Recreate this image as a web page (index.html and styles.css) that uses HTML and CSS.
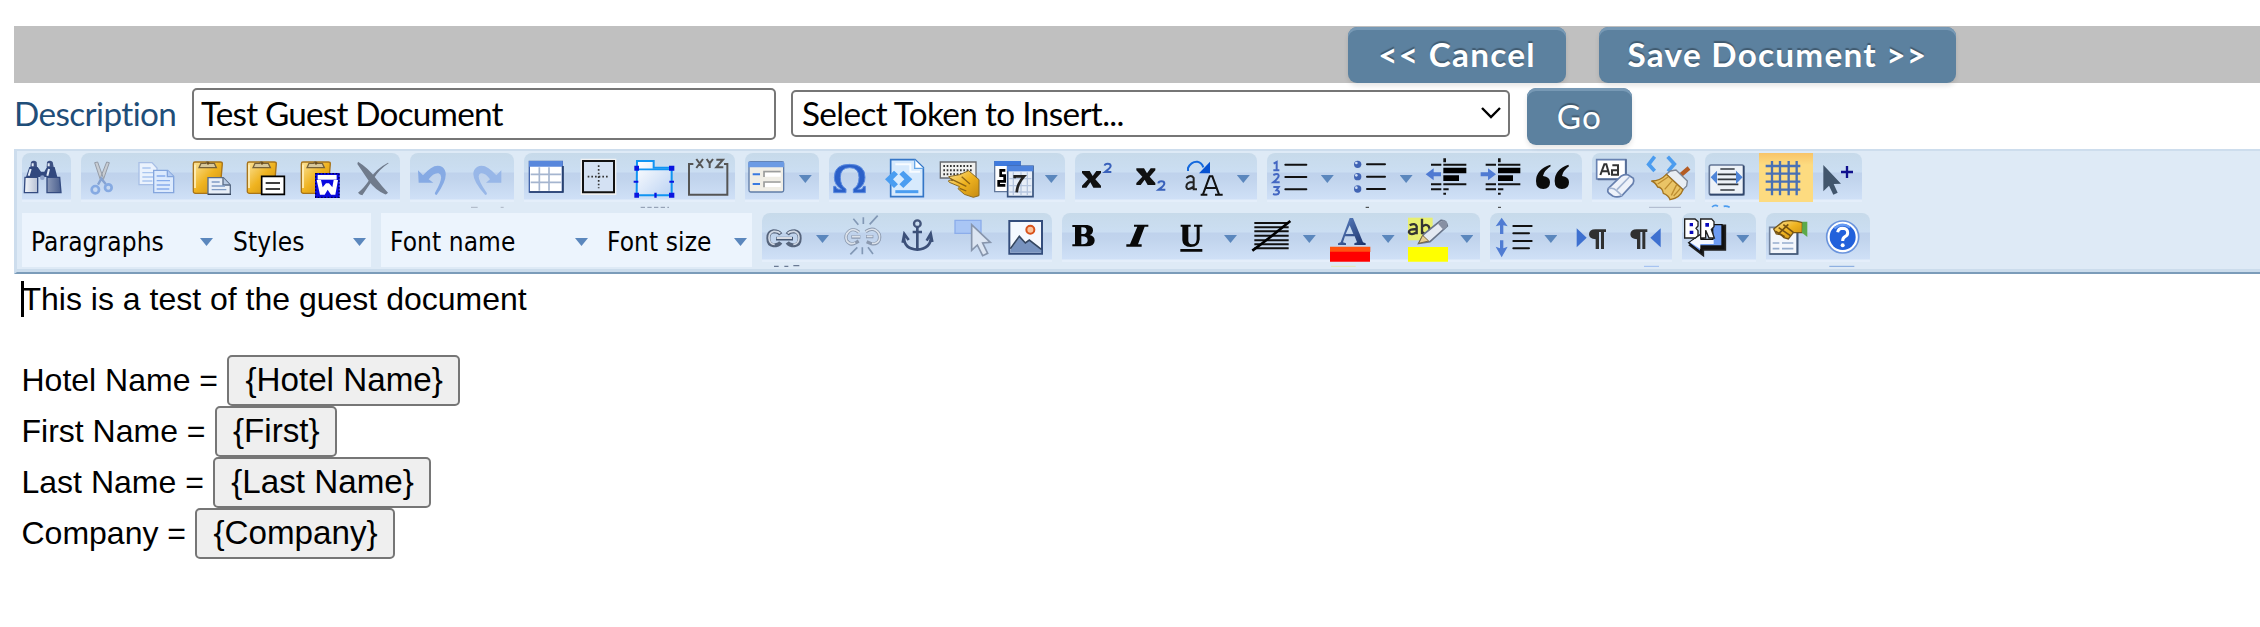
FILE: index.html
```html
<!DOCTYPE html>
<html lang="en">
<head>
<meta charset="utf-8">
<title>Guest Document</title>
<link rel="stylesheet" href="styles.css">
</head>
<body>
<svg class="defs" width="0" height="0">
<defs>
<linearGradient id="gold" x1="0" y1="0" x2="1" y2="1"><stop offset="0" stop-color="#fbe39a"/><stop offset=".5" stop-color="#efb31f"/><stop offset="1" stop-color="#c58a12"/></linearGradient>
<linearGradient id="steel" x1="0" y1="0" x2="1" y2="0"><stop offset="0" stop-color="#f4f7fb"/><stop offset="1" stop-color="#4a5f8e"/></linearGradient>
<linearGradient id="sky" x1="0" y1="0" x2="1" y2="1"><stop offset="0" stop-color="#ffffff"/><stop offset="1" stop-color="#bcd3f3"/></linearGradient>
<linearGradient id="navy" x1="0" y1="0" x2="1" y2="1"><stop offset="0" stop-color="#5f86c8"/><stop offset="1" stop-color="#1b3168"/></linearGradient>
<g id="clip">
<path d="M13 32q0-5 5-5h76q6 0 6 5l-7 82q-1 7-8 7H20q-8 0-7-8z" fill="url(#gold)" stroke="#a8741a" stroke-width="4"/>
<path d="M18 35v70" stroke="#fff0bd" stroke-width="5"/>
<path d="M30 44l6-13h14q4-9 12 0h14l6 13z" fill="#d8c89a" stroke="#75613a" stroke-width="4"/>
<circle cx="57" cy="31" r="4" fill="#6b4d1b"/>
</g>
</defs>
</svg>

<header class="actions">
<button class="btn btn-strong btn-cancel">&lt;&lt; Cancel</button>
<button class="btn btn-strong btn-save">Save Document &gt;&gt;</button>
</header>

<div class="form-row">
<label class="form-label" for="description">Description</label>
<input class="form-input" id="description" type="text" value="Test Guest Document">
<div class="form-select"><span class="select-text">Select Token to Insert...</span><svg class="chevron" viewBox="0 0 22 14"><path d="M2 2l9 9 9-9" fill="none" stroke="#000" stroke-width="2.4"/></svg></div>
<button class="btn btn-go">Go</button>
</div>

<section class="toolbar">
<div class="tool-row">
<div class="group">
<svg class="ico" viewBox="66 39 162 147"><path d="M93 66q8-7 17 0l1 15h-20zM141 66q8-7 17 0l3 15h-21z" fill="#3d5183"/><path d="M88 81h25l10 14h10l8-14h23l8 30H78z" fill="#31487e"/><path d="M75 112h38v46H73zM141 112h38l4 46h-42z" fill="url(#steel)" stroke="#344b80" stroke-width="4"/><path d="M92 87l-6 20M147 87l-5 20M98 70v9M146 70v9" stroke="#e5edf8" stroke-width="6"/><circle cx="127" cy="113" r="7" fill="#8da2c9"/></svg>
</div>
<div class="group">
<svg class="ico" viewBox="243 39 162 147"><path d="M284 68l9-2 17 48-9 5zM328 68l-8-2-19 48 9 5z" fill="#c8cdd3" stroke="#949ba6" stroke-width="3"/><circle cx="286" cy="149" r="11" fill="none" stroke="#86aae2" stroke-width="8"/><circle cx="325" cy="143" r="10" fill="none" stroke="#86aae2" stroke-width="8"/><path d="M294 134l10-18 13 16" fill="none" stroke="#86a3d2" stroke-width="7"/></svg>
<svg class="ico" viewBox="405 39 162 147"><path d="M417 68h39l15 16v50h-54z" fill="#eaf2fd" stroke="#a8bfe6" stroke-width="4"/><path d="M427 84h25M427 98h32M427 111h32M427 123h30" stroke="#a9c5ef" stroke-width="4"/><path d="M461 91h42l18 18v49h-60z" fill="#dceafd" stroke="#85a6dd" stroke-width="4"/><path d="M502 91v19h19" fill="#b5cdf3" stroke="#85a6dd" stroke-width="4"/><path d="M470 108h26M470 122h40M470 135h40M470 147h38" stroke="#86acec" stroke-width="4"/></svg>
<svg class="ico" viewBox="567 39 162 147"><use href="#clip" x="567" y="39"/><path d="M624 113h46l21 22v28h-67z" fill="#e8eff8" stroke="#5a6c86" stroke-width="4"/><path d="M669 113v22h21" fill="#b8cae2" stroke="#5a6c86" stroke-width="4"/><path d="M635 126h24M635 138h40M635 149h44" stroke="#7f9cc5" stroke-width="4"/><path d="M624 163h69" stroke="#35445c" stroke-width="4"/></svg>
<svg class="ico" viewBox="729 39 162 147"><use href="#clip" x="729" y="39"/><path d="M785 109h68v54h-68z" fill="#fff" stroke="#000" stroke-width="5"/><path d="M797 129h43M797 147h43" stroke="#000" stroke-width="4"/></svg>
<svg class="ico" viewBox="891 39 162 147"><use href="#clip" x="891" y="39"/><path d="M945 99h74v75h-74z" fill="#0a0ae0"/><path d="M947 101h70v71h-70z" fill="none" stroke="#000050" stroke-width="4" stroke-dasharray="5 5"/><path d="M953 105h57v14h-57z" fill="#fff"/><path d="M950 120h13l5 22 10-12h9l10 12 4-22h13l-8 44h-13l-10-15-9 15h-14z" fill="#fff"/></svg>
<svg class="ico" viewBox="1053 39 162 147"><path d="M1074 65q33 20 55 52 15 20 35 41-5 6-9 5-31-15-49-41-17-25-34-50zM1166 70q-27 17-44 44-17 25-35 52-8-1-13-8 20-16 36-42 19-30 54-48z" fill="#707b8c"/></svg>
</div>
<div class="group">
<svg class="ico" viewBox="30 39 162 147"><path d="M54 91l15 15q34-40 58-25 27 22-17 84-7 0-5-7 30-51 11-58-15-3-30 18l14 10H56z" fill="#86aae4"/></svg>
<svg class="ico" viewBox="192 39 162 147"><path d="M304 91l-15 15q-34-40-58-25-31 22 25 84 7 0 4-7-36-51-18-58 14-3 28 18l-12 10h46z" fill="#98b7e8"/><path d="M213 202h20M302 202h9" stroke="#aab4c2" stroke-width="3"/></svg>
</div>
<div class="group">
<svg class="ico" viewBox="372 39 162 147"><path d="M388 64h99v92h-99z" fill="#fff" stroke="#4164aa" stroke-width="4"/><path d="M387 63h101v17H387z" fill="#5887dc"/><path d="M388 156h101V78" fill="none" stroke="#243d6b" stroke-width="5"/><path d="M392 103h92M392 127h92M418 82v70M447 82v70" stroke="#a5b5cf" stroke-width="5"/></svg>
<svg class="ico" viewBox="534 39 162 147"><path d="M542 56h107v109H542z" fill="#f0f1f2"/><path d="M549 63h93v94h-93z" fill="#d4e1f3" stroke="#111" stroke-width="6"/><path d="M563 110h65M596 76v69" stroke="#333" stroke-width="5" stroke-dasharray="5 6"/></svg>
<svg class="ico" viewBox="696 39 162 147"><path d="M711 63h50v20h54v83H710z" fill="url(#sky)" stroke="#1094f2" stroke-width="6"/><path d="M711 88h102" stroke="#1094f2" stroke-width="5"/><path d="M703 77h14v15h-14zM807 77h16v15h-16zM703 158h14v15h-14zM807 158h16v15h-16zM701 122h14v6h-14zM808 122h14v6h-14zM763 158h7v15h-7z" fill="#0a15e0"/><path d="M722 202h85" stroke="#8795aa" stroke-width="3" stroke-dasharray="13 7"/></svg>
<svg class="ico" viewBox="858 39 162 147"><path d="M880 72h-13v92h115V72h-10" fill="none" stroke="#555" stroke-width="6"/><path d="M889 57l20 27M909 57l-20 27M920 57l9 13v14M939 57l-10 13M949 59h20l-20 23h21" fill="none" stroke="#555" stroke-width="6"/></svg>
</div>
<div class="group">
<svg class="ico" viewBox="1035 39 162 147"><rect x="1047" y="65" width="104" height="91" rx="5" fill="#f0eee6" stroke="#607da8" stroke-width="4"/><path d="M1045 65h107v17h-107z" fill="#6c9be4"/><path d="M1058 103h22M1058 132h22" stroke="#3a7ae0" stroke-width="6"/><path d="M1142 95h-50v16M1142 126h-50v16" fill="none" stroke="#9b9d9d" stroke-width="5"/><path d="M1095 98h47v12h-47zM1095 129h47v12h-47z" fill="#fff"/></svg>
<span class="drop"></span>
</div>
<div class="group">
<svg class="ico" viewBox="87 39 162 147"><path d="M101 158v-19h6q2 9 10 9h8q-22-12-22-36 0-39 46-39t46 39q0 24-22 36h9q7 0 8-9h6v19h-36v-11q17-9 17-35 0-29-28-29t-28 29q0 26 17 35v11z" fill="#2b60c9" stroke="#5b8ade" stroke-width="3"/></svg>
<svg class="ico" viewBox="249 39 162 147"><path d="M272 59h73l25 24v87h-98z" fill="#d7eafd" stroke="#3476c7" stroke-width="5"/><path d="M344 59v26h26" fill="#fff" stroke="#65a6e7" stroke-width="4"/><path d="M286 73h45v22h29" fill="none" stroke="#f8fcff" stroke-width="6"/><path d="M255 118l27-26 12 11-15 15 15 15-12 11zM337 118l-27-26-12 11 15 15-15 15 12 11z" fill="#4a9df1"/><path d="M286 155h69" stroke="#4a9df1" stroke-width="9"/></svg>
<svg class="ico" viewBox="411 39 162 147"><path d="M421 66h107v48H421z" fill="#f0f0ee" stroke="#686b70" stroke-width="4"/><path d="M430 78h88M430 91h88M430 103h60" stroke="#333" stroke-width="6" stroke-dasharray="5 5"/><path d="M446 110l33-6 27-12 31 27v48l-17 5-27-9-19-17 5-6-31-13q-9-9 11-5z" fill="url(#gold)" stroke="#8b6a22" stroke-width="3"/><path d="M451 116l48 23M485 110l25 22M479 145l20 8" stroke="#8d6414" stroke-width="4"/></svg>
<svg class="ico" viewBox="573 39 162 147"><path d="M584 65h77v90h-77z" fill="#fff" stroke="#63799b" stroke-width="4"/><path d="M583 63h79v15h-79z" fill="#3f7add"/><path d="M616 91h-14v16h12v17h-18v12h20" fill="none" stroke="#000" stroke-width="8"/><path d="M623 79h76v91h-76z" fill="#e7eef8" stroke="#38537e" stroke-width="5"/><path d="M621 77h79v17h-79z" fill="#4f84dd"/><path d="M628 116h66M628 137h66M628 156h66M640 97v69M663 97v69M682 97v69" stroke="#b6c6df" stroke-width="4"/><path d="M644 115v-6h28q-20 22-22 48" fill="none" stroke="#222" stroke-width="8"/></svg>
<span class="drop"></span>
</div>
<div class="group">
<svg class="ico" viewBox="825 39 162 147"><path d="M846 93h23l9 15 11-15h14v6l-17 19 17 19v6h-23l-9-16-12 16h-13v-6l18-19-18-19z" fill="#111"/><path d="M914 77q1-6 9-6 9 0 9 7 0 5-17 18h19" fill="none" stroke="#3961bb" stroke-width="6"/></svg>
<svg class="ico" viewBox="987 39 162 147"><path d="M1009 85h23l9 15 11-15h14v6l-17 19 17 19v6h-23l-9-16-12 16h-13v-6l18-19-18-19z" fill="#111"/><path d="M1075 130q1-6 9-6 9 0 9 7 0 5-17 18h20" fill="none" stroke="#3961bb" stroke-width="6"/></svg>
<svg class="ico" viewBox="-51 39 162 147"><path d="M-36 93v-9q9-20 28-19 13 2 18 17" fill="none" stroke="#1469dd" stroke-width="6"/><path d="M30 65v35H-3z" fill="#0752d1"/><path d="M-41 114q15-12 22 0v34h10M-19 126q-22-1-22 14 3 14 22 0" fill="none" stroke="#222" stroke-width="6"/><path d="M2 164h20M45 164h23M9 163l20-54h8l20 54M17 144h32" fill="none" stroke="#111" stroke-width="6"/></svg>
<span class="drop"></span>
</div>
<div class="group">
<svg class="ico" viewBox="198 39 162 147"><path d="M218 71l9-5v24M217 91h18M217 105q15-7 16 2 0 6-16 20h19M217 141h16l-7 10q9 1 8 7-3 9-18 4" fill="none" stroke="#4467c2" stroke-width="6"/><path d="M253 74h63M253 111h63M253 148h63" stroke="#111" stroke-width="6" stroke-linecap="round"/></svg>
<span class="drop"></span>
<svg class="ico" viewBox="435 39 162 147"><g fill="#4164b4"><circle cx="470" cy="73" r="11"/><circle cx="470" cy="110" r="11"/><circle cx="470" cy="147" r="11"/></g><g fill="#cddcf5"><circle cx="466" cy="69" r="4"/><circle cx="466" cy="106" r="4"/><circle cx="466" cy="143" r="4"/></g><path d="M498 73h54M498 110h54M498 147h54" stroke="#111" stroke-width="6" stroke-linecap="round"/><path d="M494 202h10" stroke="#333" stroke-width="3"/></svg>
<span class="drop"></span>
<svg class="ico" viewBox="672 39 162 147"><path d="M730 58h8M730 64h8M730 161h8M693 74h31M730 74h69M693 133h31M730 133h69M693 148h31M730 148h16" stroke="#111" stroke-width="6"/><path d="M730 83h69v17h-69zM730 106h47v17h-47z" fill="#000"/><path d="M677 103l24-18v12h22v12h-22v12z" fill="#4f7ad2"/></svg>
<svg class="ico" viewBox="834 39 162 147"><path d="M894 58h8M894 64h8M894 161h8M857 74h31M894 74h67M857 133h31M894 133h67M857 148h31M894 148h16" stroke="#111" stroke-width="6"/><path d="M894 83h67v17h-67zM894 106h45v17h-45z" fill="#000"/><path d="M888 103l-24-18v12h-22v12h22v12z" fill="#4f7ad2"/><path d="M894 202h9" stroke="#333" stroke-width="3"/></svg>
<svg class="ico" viewBox="-24 39 162 147"><path d="M31 74q-43 14-43 49 0 24 22 24 20 0 20-20 0-17-21-19 3-16 23-29zM85 74q-41 14-41 49 0 24 22 24 21 0 21-20 0-17-21-19 3-16 21-29z" fill="#0b0b0b"/></svg>
</div>
<div class="group">
<svg class="ico" viewBox="153 39 162 147"><path d="M167 59h87v58h-87z" fill="#fff" stroke="#6882b2" stroke-width="5"/><path d="M255 58v60h-85" fill="none" stroke="#536a93" stroke-width="5"/><path d="M178 105l12-32h6l9 32M183 94h18M214 76h17v28h-18V91h18" fill="none" stroke="#333" stroke-width="6"/><path d="M202 145l39-37q11-6 21-3l15 10q3 8-1 16l-33 36q-14 7-28 1l-12-9q-5-5-1-14z" fill="#eef2fa" stroke="#667fae" stroke-width="5"/><path d="M203 146q13-4 23 5l17 16M228 149l37-38" fill="none" stroke="#a3b4d1" stroke-width="5"/></svg>
<svg class="ico" viewBox="315 39 162 147"><path d="M341 50l-18 23 18 20M380 50l20 22-19 22" fill="none" stroke="#4b9cef" stroke-width="11"/><path d="M444 84l-26 22" stroke="#b45c24" stroke-width="13"/><path d="M388 93l17-3 34 33-2 15-11 11-50-46z" fill="#e8edf3" stroke="#7c8595" stroke-width="4"/><path d="M376 103l50 46q-9 25-39 30-4-13-20-19-3-18-17-19-7-14-19-18 27 0 45-20z" fill="#eac466" stroke="#a2731f" stroke-width="4"/><path d="M381 111l-31 21M394 122l-23 26M407 134l-16 32M418 145l-20 23" stroke="#bd8d31" stroke-width="4"/><path d="M324 202h96" stroke="#aab5c9" stroke-width="3"/></svg>
</div>
<div class="group">
<svg class="ico" viewBox="492 39 162 147"><rect x="505" y="75" width="103" height="89" rx="5" fill="#edf2f8" stroke="#637696" stroke-width="5"/><path d="M608 77v87H506" fill="none" stroke="#31476d" stroke-width="5"/><path d="M538 87h43M530 103h62M530 118h62M530 133h62M538 150h43" stroke="#33383f" stroke-width="5"/><path d="M509 112l19-20v40zM605 112l-20-20v40z" fill="#4e84d7"/><path d="M513 201q9-8 18-2M548 199q9-2 18 3" fill="none" stroke="#4b9cef" stroke-width="5"/></svg>
<svg class="ico ico-on" viewBox="651 39 162 147"><path d="M671 78h104M671 101h104M671 125h104M671 149h104M690 63v103M714 63v103M740 63v103M764 63v103" stroke="#4970b4" stroke-width="7"/></svg>
<svg class="ico" viewBox="816 39 162 147"><path d="M847 75v79l17-17 13 27 13-6-12-26 22-1z" fill="#42566d"/><path d="M918 78v36M900 96h36" stroke="#10108d" stroke-width="7"/></svg>
</div>
</div>

<div class="tool-row">
<div class="picker-group">
<span class="picker picker-para">Paragraphs</span><span class="picker picker-style">Styles</span>
</div>
<div class="picker-group">
<span class="picker picker-font">Font name</span><span class="picker picker-size">Font size</span>
</div>
<div class="group">
<svg class="ico" viewBox="1086 220 162 147"><path d="M1142 284q-6-9-22-9-15 2-15 21t15 21q16 0 22-9M1162 284q6-9 22-9 15 2 15 21t-15 21q-16 0-22-9" fill="none" stroke="#56647c" stroke-width="12"/><path d="M1141 281q-7-7-20-6-14 3-14 20 1 19 17 19M1163 281q7-7 20-6 14 3 14 20-1 19-17 19" fill="none" stroke="#d2dae6" stroke-width="5"/><path d="M1128 297h51" stroke="#465772" stroke-width="11"/><path d="M1130 295h46" stroke="#f4f7fc" stroke-width="5"/><path d="M1122 380h14M1153 380h12M1180 378h18" stroke="#6a7a94" stroke-width="4"/></svg>
<span class="drop"></span>
<svg class="ico" viewBox="123 220 162 147"><path d="M177 278q-16-14-29-4-15 12-8 29 10 16 28 6l8-5M197 276q17-12 30-4 15 9 11 28-7 16-24 12l-14-6M154 292h27M198 291h22" fill="none" stroke="#8b99af" stroke-width="10"/><path d="M177 278q-16-14-29-4-15 12-8 29 10 14 26 6M197 276q17-12 30-4 15 9 11 28-7 14-22 11M156 291h24M200 290h18" fill="none" stroke="#dbe2eb" stroke-width="5"/><path d="M160 237l15 18M190 233v20M233 228l-24 26M151 344l21-21M187 323v21M204 323l15 20" stroke="#8298b5" stroke-width="5"/></svg>
<svg class="ico" viewBox="285 220 162 147"><circle cx="352" cy="252" r="10" fill="none" stroke="#43557b" stroke-width="7"/><path d="M352 261v66M338 277h28M312 293q0 35 40 37 40-3 41-38M308 309l5-26 13 18M380 303l12-21 5 25" fill="none" stroke="#3c5079" stroke-width="8"/></svg>
<svg class="ico" viewBox="447 220 162 147"><path d="M465 242h78v39h-78z" fill="#a9c6f5" stroke="#8cadea" stroke-width="4"/><path d="M515 255v77l17-16 16 32 15-7-15-31 23-2z" fill="#dce5f2" stroke="#8795ac" stroke-width="5"/></svg>
<svg class="ico" viewBox="609 220 162 147"><path d="M628 244h98v98h-98z" fill="#f5f9ff" stroke="#344d7c" stroke-width="6"/><path d="M631 331l28-40 18 19 11-8 36 29v8h-93z" fill="#7893bf"/><path d="M631 327l27-37 18 20 12-9 36 28" fill="none" stroke="#344660" stroke-width="5"/><circle cx="691" cy="270" r="12" fill="#fac49e" stroke="#d8521b" stroke-width="6"/></svg>
</div>
<div class="group">
<svg class="ico" viewBox="786 220 162 147"><path d="M817 256h45q18 3 17 17-1 10-10 13 15 3 15 17-1 17-24 17h-43v-6h8v-52h-8zM844 263v20q16 2 16-10 0-12-16-10M844 290v24q19 1 19-12 0-13-19-12" fill="#080808" fill-rule="evenodd"/></svg>
<svg class="ico" viewBox="948 220 162 147"><path d="M1002 255h43v6h-11l-20 53h11v7h-46v-7h11l22-53h-10z" fill="#090909"/></svg>
<svg class="ico" viewBox="1110 220 162 147"><path d="M1142 255h30v6h-7v41q0 13 12 12 13 0 13-16v-37h-8v-6h25v6h-8v38q-2 23-27 23-24 0-25-20v-41h-5zM1141 328h66v8h-66z" fill="#090909"/></svg>
<span class="drop"></span>
<svg class="ico" viewBox="147 220 162 147"><path d="M163 250h103M163 263h103M163 275h103M163 288h103M163 302h103M163 314h103M163 326h103" stroke="#111" stroke-width="6"/><path d="M157 333l23-17 35-27 30-24 26-21" stroke="#000" stroke-width="8"/></svg>
<span class="drop"></span>
<svg class="ico" viewBox="384 220 162 147"><path d="M449 235h10l30 73 8 3v5h-34v-5l8-3-7-18h-29l-6 18 9 3v5h-24v-5l8-3zM449 257l-12 26h23z" fill="url(#navy)" fill-rule="evenodd"/><path d="M390 321h121v16H390z" fill="#ff5210"/><path d="M390 336h120v30H390z" fill="red"/><path d="M393 380h74" stroke="#e2e9b4" stroke-width="3"/></svg>
<span class="drop"></span>
<svg class="ico" viewBox="621 220 162 147"><path d="M627 234h74v68h-74z" fill="#e8ef70"/><path d="M632 257q17-9 21 3v24M653 269q-24-2-23 9 6 11 23 0M669 237v47M669 262q12-12 20-2 7 12-3 21-10 5-17-5" fill="none" stroke="#333" stroke-width="7"/><path d="M659 311l15-27 52-42q16-1 19 17l-52 47z" fill="#e4e9f2" stroke="#69758a" stroke-width="5"/><path d="M659 311l12-24 18 17z" fill="#e8cf91" stroke="#7b6944" stroke-width="3"/><path d="M717 252l16-11 11 6v14l-11 9z" fill="#8790a3"/><path d="M627 322h120v44H627z" fill="#ff0"/></svg>
<span class="drop"></span>
</div>
<div class="group">
<svg class="ico" viewBox="870 220 162 147"><path d="M905 234l18 26-13-3v26h-10v-26l-13 3zM905 353l18-32-13 5v-24h-10v24l-13-5z" fill="#507cd3"/><path d="M940 259h55M940 281h47M940 304h55M940 326h47" stroke="#111" stroke-width="6" stroke-linecap="round"/></svg>
<span class="drop"></span>
<svg class="ico" viewBox="87 220 162 147"><path d="M110 266l30 28-30 29z" fill="#3e70d0"/><path d="M198 269v8h-6v51h-9v-51h-6v51h-10v-29q-20-2-20-15 1-15 19-15z" fill="#303030"/></svg>
<svg class="ico" viewBox="249 220 162 147"><path d="M322 269v8h-6v51h-9v-51h-6v51h-10v-29q-20-2-20-15 1-15 19-15z" fill="#303030"/><path d="M362 266l-31 28 31 29z" fill="#3e70d0"/><path d="M312 380h45" stroke="#9abbf0" stroke-width="3"/></svg>
</div>
<div class="group">
<svg class="ico" viewBox="426 220 162 147"><path d="M525 257h31v74h-66v17l-41-31 41-31v16h35z" fill="#111" stroke="#222" stroke-width="5"/><path d="M518 255h28v64h-64v18l-36-28 36-25v15h36z" fill="#6e9cf2" stroke="#111" stroke-width="4"/><path d="M450 308l31-21v14h40v12h-40v15z" fill="#f4f8ff"/><path d="M434 238h31l9 8v13l-6 7 6 7v15l-8 7h-32zM482 238h33l7 8v15l-8 8 9 26h-16l-10-23v23h-15z" fill="#fff" stroke="#222" stroke-width="4"/><path d="M449 250h10v10h-10zM449 273h11v10h-11zM496 250h11v11h-11z" fill="#0808bd"/></svg>
<span class="drop"></span>
</div>
<div class="group">
<svg class="ico" viewBox="678 220 162 147"><path d="M689 263h82v80h-82z" fill="#f3f6fb" stroke="#72839e" stroke-width="5"/><path d="M773 266v77h-84" fill="none" stroke="#435978" stroke-width="5"/><path d="M698 310h20M726 310h34M698 327h20M726 327h34" stroke="#96adce" stroke-width="5"/><path d="M701 268l28-22q29-7 58 3v30h-27l-15 19-13-4-9-9-14-2z" fill="url(#gold)" stroke="#73551a" stroke-width="4"/><path d="M716 264l35 24M730 255l30 23M706 275l28 16M714 284l31-30" stroke="#765211" stroke-width="5"/><path d="M787 246h15v46l-16-13z" fill="#5caa4b"/></svg>
<svg class="ico" viewBox="840 220 162 147"><circle cx="908" cy="292" r="48" fill="#fff" stroke="#6a94dd" stroke-width="5"/><circle cx="908" cy="292" r="39" fill="#2261db"/><path d="M883 266q23-20 47-3" fill="none" stroke="#679bf2" stroke-width="7"/><path d="M893 278q2-12 15-12 15 1 15 13 0 8-8 12-7 4-7 13" fill="none" stroke="#fff" stroke-width="9"/><circle cx="908" cy="317" r="6" fill="#fff"/><path d="M868 380h75" stroke="#7ea4dc" stroke-width="3"/></svg>
</div>
</div>
</section>

<main class="document">
<p class="line line-first"><span class="caret"></span>This is a test of the guest document</p>
<p class="line">Hotel Name = <button class="token">{Hotel Name}</button></p>
<p class="line">First Name = <button class="token">{First}</button></p>
<p class="line">Last Name = <button class="token">{Last Name}</button></p>
<p class="line">Company = <button class="token">{Company}</button></p>
</main>
</body>
</html>
```

FILE: styles.css
```css
* { box-sizing: border-box; }

body {
  margin: 0;
  padding: 26px 0 0 14px;
  height: 627px;
  overflow: hidden;
  background: #fff;
  color: #000;
  font-family: Lato, sans-serif;
}

.defs { position: absolute; }

.actions {
  display: flex;
  gap: 33px;
  height: 57px;
  padding: 1px 0 0 1334px;
  background: #c0c0c0;
}

.btn {
  height: 56px;
  padding: 0 0 2px;
  border: 0;
  border-radius: 9px;
  background: #5c819f;
  box-shadow: inset 0 3px 0 #7799b5, 0 3px 5px rgba(0, 0, 0, .1);
  color: #fff;
  font: 33.3px/54px Lato, sans-serif;
  letter-spacing: 1.25px;
  text-shadow: 0 -2px 1px rgba(0, 0, 0, .3);
  white-space: nowrap;
}

.btn-strong { font-weight: 700; }
.btn-cancel { width: 218px; }
.btn-save { width: 357px; }
.btn-go { width: 105px; height: 57px; margin-left: 17px; }

.form-row {
  display: flex;
  align-items: flex-start;
  height: 66px;
  padding-top: 5px;
}

.form-label {
  width: 178px;
  color: #1f4e79;
  font-size: 33.3px;
  line-height: 50px;
  letter-spacing: -.6px;
}

.form-input,
.form-select {
  border: 2px solid #767676;
  border-radius: 5px;
  background: #fff;
  color: #000;
  font: 33.3px Lato, sans-serif;
}

.form-input {
  width: 584px;
  height: 52px;
  padding: 0 7px 2px;
  letter-spacing: -.8px;
}

.form-select {
  display: flex;
  align-items: center;
  justify-content: space-between;
  width: 719px;
  height: 47px;
  margin: 2px 0 0 15px;
  padding: 0 6px 1px 9px;
  letter-spacing: -.65px;
}

.chevron { width: 22px; height: 14px; }

.toolbar {
  height: 125px;
  padding: 2px 0 0 5px;
  border-top: 2px solid #cddded;
  border-left: 3px solid #cddded;
  border-bottom: 2px solid #7b9cb9;
  background: linear-gradient(#deeaf6 0 118px, #cbdcec 118px);
}

.tool-row {
  display: flex;
  gap: 10px;
  height: 60px;
}

.group {
  display: flex;
  height: 49px;
  border-radius: 8px 8px 0 0;
  background: linear-gradient(#c7daea 0, #cbdef2 19px, #bfd2ec 20px, #c1d4ed 26px, #cfe0f7 46px, #e4eefa 47px);
}

.ico {
  flex: none;
  width: 54px;
  height: 49px;
  overflow: visible;
  filter: blur(.35px);
}

.ico:last-child,
.drop:last-child { margin-right: -4.8px; }

.ico-on {
  background: linear-gradient(#f8c468, #fddb80 12px, #fddb80);
  filter: none;
}

.drop {
  flex: none;
  width: 24.8px;
  height: 49px;
}

.drop::before,
.picker::after {
  content: "";
  display: block;
  width: 13px;
  height: 8px;
  background: #5b87bd;
  clip-path: polygon(0 0, 100% 0, 50% 100%);
}

.drop::before { margin-top: 22px; }

.picker-group {
  display: flex;
  height: 54px;
  background: #ecf4fd;
}

.picker {
  display: flex;
  align-items: center;
  justify-content: space-between;
  font-family: "DejaVu Sans Condensed", "DejaVu Sans", sans-serif;
  font-stretch: condensed;
  font-size: 26px;
  letter-spacing: .1px;
  white-space: nowrap;
}

.picker-para { width: 201px; padding: 4px 10px 0 9px; }
.picker-style { width: 148px; padding: 4px 5px 0 10px; }
.picker-font { width: 217px; padding: 4px 10px 0 9px; }
.picker-size { width: 154px; padding: 4px 5px 0 9px; }

.document {
  padding: 7px 0 0 7.5px;
  font: 32px/37px "Liberation Sans", Arial, sans-serif;
}

.line {
  position: relative;
  display: flex;
  align-items: baseline;
  height: 51px;
  margin: 0;
  white-space: pre;
}

.line-first { height: 74px; }

.caret {
  position: absolute;
  top: 0;
  left: -.5px;
  width: 3px;
  height: 36px;
  background: #000;
}

.token {
  height: 51px;
  margin-left: .5px;
  padding: 0 15px 1px 16px;
  border: 2px solid #767676;
  border-radius: 5px;
  background: #efefef;
  color: #000;
  font: 33.2px "Liberation Sans", Arial, sans-serif;
}
```
